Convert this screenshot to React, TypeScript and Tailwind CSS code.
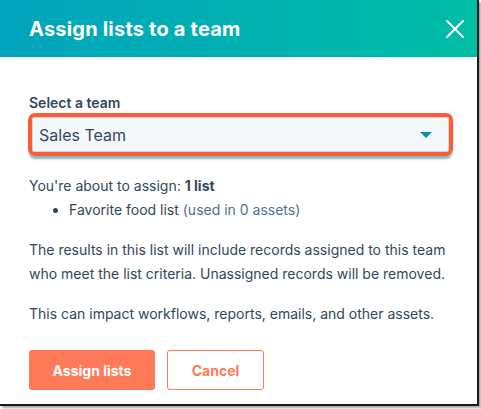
const font = { fontFamily: "Inter, 'Noto Sans', sans-serif" };

export default function App() {
  return (
    <div className="h-[409px] w-[481px] bg-white" style={font}>
      <div className="flex h-[406px] w-[479px] flex-col border-r-2 border-b-2 border-[#1a1a1a] bg-white shadow-[2px_2px_2px_rgba(0,0,0,0.35)]">
        {/* Header */}
        <div className="flex h-[57px] shrink-0 items-center justify-between bg-gradient-to-r from-[#00a4bd] to-[#00bda5] pl-[29px] pr-[13px]">
          <h1 className="text-[20px] font-bold tracking-[0.2px] text-white">Assign lists to a team</h1>
          <svg width="18" height="18" viewBox="0 0 18 18" className="mr-[0px]">
            <path d="M1 1 L17 17 M17 1 L1 17" stroke="white" strokeWidth="2" strokeLinecap="round" />
          </svg>
        </div>

        {/* Body */}
        <div className="flex flex-col px-[29px] pt-[36px] text-[#33475b]">
          <label className="text-[14px] font-semibold leading-[20px]">Select a team</label>

          <div className="-ml-[1px] w-[425px] rounded-[7px] border-[4px] border-[#ff5c35] shadow-[0_4px_2px_-1px_rgba(0,100,110,0.45)]">
            <div className="flex h-[35px] items-center justify-between rounded-[3px] border border-[#cbd6e2] bg-[#f5f8fa] pl-[6px] pr-[16px]">
              <span className="text-[16px]">Sales Team</span>
              <svg width="12" height="6" viewBox="0 0 12 6">
                <path d="M0 0 L12 0 L6 6 Z" fill="#0091ae" />
              </svg>
            </div>
          </div>

          <p className="mt-[18px] text-[14px] leading-[24px]">
            You're about to assign: <span className="font-bold">1 list</span>
          </p>
          <ul className="list-disc pl-[40px] text-[14px] leading-[24px]">
            <li>
              Favorite food list <span className="text-[#516f90]">(used in 0 assets)</span>
            </li>
          </ul>

          <p className="mt-[16px] text-[14px] leading-[24px]">
            The results in this list will include records assigned to this team who meet the list criteria. Unassigned
            records will be removed.
          </p>

          <p className="mt-[16px] text-[14px] leading-[24px]">This can impact workflows, reports, emails, and other assets.</p>

          <div className="mt-[24px] flex gap-[12px]">
            <button className="h-[40px] w-[126px] rounded-[3px] bg-[#ff7a59] text-[14px] font-bold text-white">
              Assign lists
            </button>
            <button className="h-[40px] w-[97px] rounded-[3px] border border-[#ff7a59] bg-white text-[14px] font-bold text-[#ff7a59]">
              Cancel
            </button>
          </div>
        </div>
      </div>
    </div>
  );
}
